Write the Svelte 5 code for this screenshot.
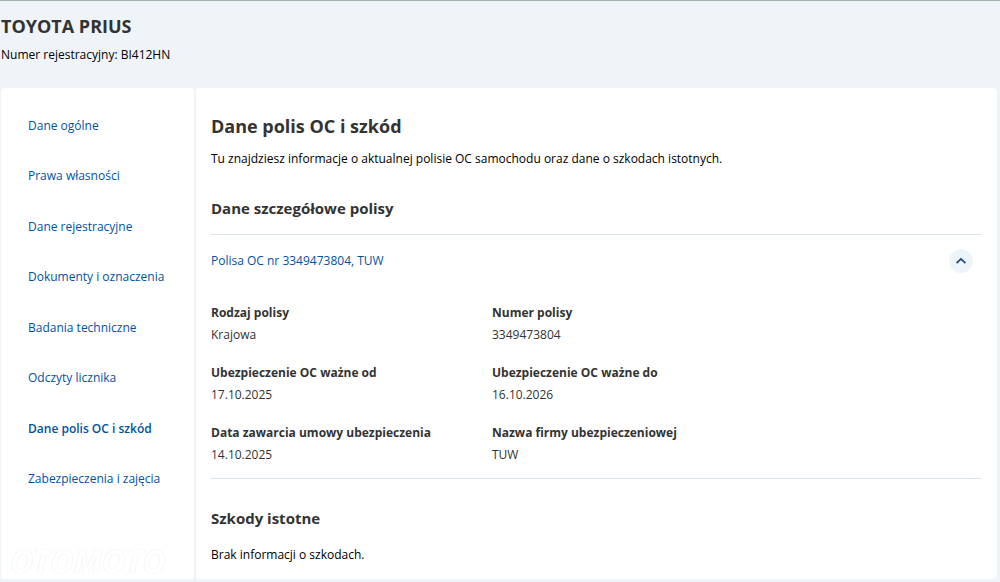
<script>
  // Vehicle data
  const vehicle = { name: 'TOYOTA PRIUS', plate: 'BI412HN' };

  const sections = [
    { id: 'ogolne', name: 'Dane ogólne' },
    { id: 'wlasnosc', name: 'Prawa własności' },
    { id: 'rejestracja', name: 'Dane rejestracyjne' },
    { id: 'dokumenty', name: 'Dokumenty i oznaczenia' },
    { id: 'badania', name: 'Badania techniczne' },
    { id: 'licznik', name: 'Odczyty licznika' },
    { id: 'polisy', name: 'Dane polis OC i szkód' },
    { id: 'zabezpieczenia', name: 'Zabezpieczenia i zajęcia' }
  ];

  const policy = {
    title: 'Polisa OC nr 3349473804, TUW',
    fields: [
      { label: 'Rodzaj polisy', value: 'Krajowa' },
      { label: 'Numer polisy', value: '3349473804' },
      { label: 'Ubezpieczenie OC ważne od', value: '17.10.2025' },
      { label: 'Ubezpieczenie OC ważne do', value: '16.10.2026' },
      { label: 'Data zawarcia umowy ubezpieczenia', value: '14.10.2025' },
      { label: 'Nazwa firmy ubezpieczeniowej', value: 'TUW' }
    ]
  };

  let activeSection = $state('polisy');
  let expanded = $state(true);
</script>

<div class="page">
  <header class="page-header">
    <h1>{vehicle.name}</h1>
    <p>Numer rejestracyjny: {vehicle.plate}</p>
  </header>

  <div class="columns">
    <nav class="card sidebar">
      <ul>
        {#each sections as section}
          <li>
            <a
              href="#{section.id}"
              class:active={activeSection === section.id}
              aria-current={activeSection === section.id ? 'page' : undefined}
              onclick={() => (activeSection = section.id)}
            >{section.name}</a>
          </li>
        {/each}
      </ul>
      <span class="watermark">OTOMOTO</span>
    </nav>

    <main class="card content">
      <h2>Dane polis OC i szkód</h2>
      <p>Tu znajdziesz informacje o aktualnej polisie OC samochodu oraz dane o szkodach istotnych.</p>

      <h3>Dane szczegółowe polisy</h3>
      <section class="policy">
        <button
          class="policy-toggle"
          aria-expanded={expanded}
          aria-controls="policy-details"
          onclick={() => (expanded = !expanded)}
        >
          <span>{policy.title}</span>
          <span class="chevron" class:closed={!expanded}>
            <svg viewBox="0 0 24 24" width="24" height="24" aria-hidden="true">
              <path d="M7.6 14.2 12 10 16.4 14.2" />
            </svg>
          </span>
        </button>

        {#if expanded}
          <dl id="policy-details">
            {#each policy.fields as field}
              <div class="field">
                <dt>{field.label}</dt>
                <dd>{field.value}</dd>
              </div>
            {/each}
          </dl>
        {/if}
      </section>

      <h3>Szkody istotne</h3>
      <p class="empty">Brak informacji o szkodach.</p>
    </main>
  </div>
</div>

<style>
  :global(body) {
    margin: 0;
    background: #eff4f9;
  }

  .page {
    border-top: 1px solid #a3b3a9;
    font-family: 'Open Sans', 'Noto Sans', sans-serif;
    font-size: 12px;
    line-height: 20px;
    color: #000;
  }

  h1,
  h2,
  h3,
  p,
  ul,
  dl,
  dd {
    margin: 0;
    padding: 0;
  }

  h1,
  h2,
  h3 {
    color: #333;
    font-weight: 700;
  }

  h1,
  h2 {
    font-size: 18px;
    line-height: 24px;
  }

  h3 {
    font-size: 15px;
    line-height: 22px;
  }

  .page-header {
    padding: 13px 1px 23px;
  }

  .page-header p {
    margin-top: 7px;
  }

  .columns {
    display: flex;
    gap: 2px;
    padding: 0 3px 2px 1px;
  }

  .card {
    background: #fff;
    border-radius: 4px;
  }

  .sidebar {
    display: flex;
    flex: 0 0 193px;
    flex-direction: column;
  }

  .sidebar ul {
    display: flex;
    flex: 1;
    flex-direction: column;
    justify-content: space-between;
    padding: 28px 0 57px 27px;
    list-style: none;
  }

  .sidebar a {
    display: block;
    color: #0052a5;
    text-decoration: none;
    white-space: nowrap;
  }

  .sidebar a.active {
    font-weight: 600;
  }

  .watermark {
    padding: 0 0 3px 9px;
    font-size: 32px;
    line-height: 30px;
    font-style: italic;
    font-weight: 700;
    color: #fff;
    text-shadow: 0 0 1px #ddd;
  }

  .content {
    flex: 1;
    padding: 26px 16px 14px 15px;
  }

  .content p {
    margin-top: 11px;
  }

  .content p.empty {
    margin-top: 16px;
  }

  .content h3 {
    margin-top: 28px;
  }

  .policy {
    margin-top: 15px;
    border-top: 1px solid #d8e2ec;
    border-bottom: 1px solid #d3e2f0;
  }

  .policy-toggle {
    display: flex;
    justify-content: space-between;
    align-items: center;
    width: 100%;
    padding: 14px 8px 14px 0;
    border: none;
    background: none;
    font: inherit;
    color: #0052a5;
    text-align: left;
    cursor: pointer;
  }

  .chevron {
    display: flex;
    border-radius: 50%;
    background: #edf5fb;
  }

  .chevron.closed {
    transform: rotate(180deg);
  }

  .chevron path {
    fill: none;
    stroke: #1c4680;
    stroke-width: 1.7;
  }

  dl {
    display: grid;
    grid-template-columns: 281px 1fr;
    row-gap: 18px;
    padding: 16px 0 13px;
    color: #333;
  }

  dt {
    font-weight: 700;
  }

  dd {
    margin-top: 2px;
  }
</style>
